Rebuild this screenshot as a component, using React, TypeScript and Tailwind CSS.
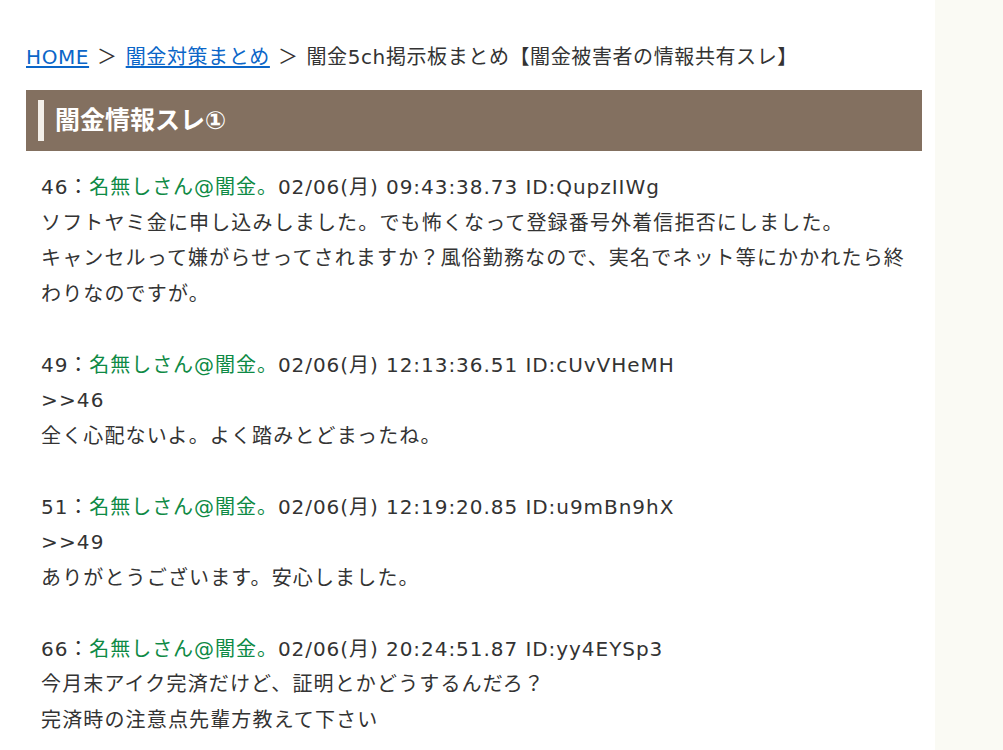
import React from 'react';

const posts = [
  {
    no: 46,
    date: '02/06(月) 09:43:38.73 ID:QupzIIWg',
    lines: [
      'ソフトヤミ金に申し込みしました。でも怖くなって登録番号外着信拒否にしました。',
      'キャンセルって嫌がらせってされますか？風俗勤務なので、実名でネット等にかかれたら終わりなのですが。',
    ],
  },
  {
    no: 49,
    date: '02/06(月) 12:13:36.51 ID:cUvVHeMH',
    lines: ['>>46', '全く心配ないよ。よく踏みとどまったね。'],
  },
  {
    no: 51,
    date: '02/06(月) 12:19:20.85 ID:u9mBn9hX',
    lines: ['>>49', 'ありがとうございます。安心しました。'],
  },
  {
    no: 66,
    date: '02/06(月) 20:24:51.87 ID:yy4EYSp3',
    lines: ['今月末アイク完済だけど、証明とかどうするんだろ？', '完済時の注意点先輩方教えて下さい'],
  },
];

export default function App() {
  return (
    <div
      className="flex min-h-[750px] bg-[#fafaf4] text-[#333333]"
      style={{ fontFamily: '"DejaVu Sans", "Noto Sans CJK JP", sans-serif' }}
    >
      <main className="w-[935px] shrink-0 bg-white pl-[26px] pr-[13px] pt-[40px]">
        {/* breadcrumb */}
        <div className="flex items-center text-[20px] leading-[35px] tracking-[0.6px]">
          <a href="#" className="text-[#0b66c8] underline underline-offset-2">HOME</a>
          <span className="mx-[8px]">＞</span>
          <a href="#" className="text-[#0b66c8] underline underline-offset-2">闇金対策まとめ</a>
          <span className="mx-[8px]">＞</span>
          <span>闇金5ch掲示板まとめ【闇金被害者の情報共有スレ】</span>
        </div>

        <h2 className="mt-[15px] flex h-[61px] items-center bg-[#837060] pl-[12px] text-[25px] font-bold text-white">
          <span className="mr-[11px] h-[41px] w-[6px] bg-[#f3efe9]" />
          闇金情報スレ①
        </h2>

        <div className="px-[15px] pt-[19px] text-[20px] leading-[35.5px] tracking-[1.15px]">
          {posts.map((p) => (
            <div key={p.no} className="mb-[35.5px]">
              <div className="tracking-[0.95px]">
                {p.no}：<span className="text-[#0e8a45]">名無しさん@闇金。</span>
                {p.date}
              </div>
              {p.lines.map((l, i) => (
                <div key={i}>{l}</div>
              ))}
            </div>
          ))}
        </div>
      </main>
      <aside className="flex-1" />
    </div>
  );
}
